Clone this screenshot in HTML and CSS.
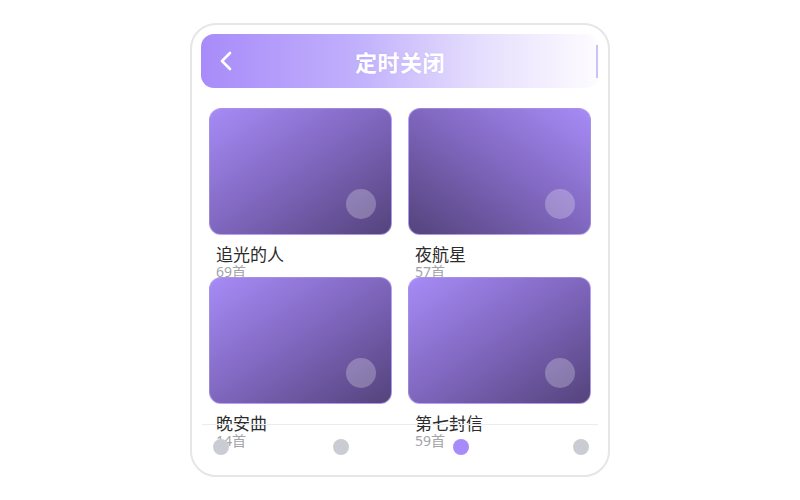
FILE: index.html
```html
<!DOCTYPE html>
<html lang="zh">
<head>
    <meta charset="UTF-8">
    <meta name="viewport" content="width=device-width, initial-scale=1.0">
    <title>定时关闭</title>
    <link rel="stylesheet" href="styles.css">
</head>
<body>
    <div class="phone">
        <header class="topbar">
            <a href="#" class="back">
                <svg width="20" height="22" viewBox="0 0 20 22"><path d="M11 3 L3 11 L11 19" fill="none" stroke="#fff" stroke-width="2.6" stroke-linecap="round" stroke-linejoin="round"/></svg>
            </a>
            <h1>定时关闭</h1>
            <span class="edge"></span>
        </header>

        <!-- 歌单列表 -->
        <main class="grid">
            <div class="item">
                <div class="cover"><span class="dot"></span></div>
                <div class="info">
                    <div class="name">追光的人</div>
                    <div class="count">69首</div>
                </div>
            </div>
            <div class="item">
                <div class="cover flip"><span class="dot"></span></div>
                <div class="info">
                    <div class="name">夜航星</div>
                    <div class="count">57首</div>
                </div>
            </div>
            <div class="item">
                <div class="cover"><span class="dot"></span></div>
                <div class="info">
                    <div class="name">晚安曲</div>
                    <div class="count">14首</div>
                </div>
            </div>
            <div class="item">
                <div class="cover"><span class="dot"></span></div>
                <div class="info">
                    <div class="name">第七封信</div>
                    <div class="count">59首</div>
                </div>
            </div>
        </main>

        <nav class="tabs">
            <span class="tab"></span>
            <span class="tab"></span>
            <span class="tab active"></span>
            <span class="tab"></span>
        </nav>
    </div>
</body>
</html>
```

FILE: styles.css
```css
body {
    margin: 0;
    padding: 23px 0 0;
    background-color: #fff;
    font-family: "Noto Sans", "Noto Sans CJK SC", sans-serif;
}
.phone {
    position: relative;
    box-sizing: border-box;
    width: 420px;
    height: 454px;
    margin: 0 auto;
    padding: 9px 9px 0;
    border: 2px solid #e6e6ea;
    border-radius: 26px;
    background-color: #fff;
    overflow: hidden;
}
.topbar {
    display: flex;
    align-items: center;
    height: 54px;
    padding: 0 0 0 18px;
    border-radius: 13px;
    background: linear-gradient(to right, #a88bf9 0%, #c2b1fc 40%, #e6defd 70%, #fdfcff 100%);
}
.back {
    display: flex;
    width: 30px;
    height: 22px;
}
.topbar h1 {
    flex: 1;
    margin: 0;
    text-align: center;
    color: #fff;
    font-size: 22px;
    font-weight: 700;
    letter-spacing: 0.5px;
    text-shadow: 0 0 2px rgba(120, 90, 220, 0.15);
}
.edge {
    width: 45px;
    height: 33px;
    border-right: 2px solid #cdc2f8;
    margin-right: 1px;
}
.grid {
    display: grid;
    grid-template-columns: 183px 183px;
    grid-auto-rows: 153px;
    column-gap: 16px;
    row-gap: 16px;
    padding: 20px 8px 0;
}
.cover {
    position: relative;
    box-sizing: border-box;
    height: 127px;
    border-radius: 12px;
    border: 1px solid rgba(196, 181, 253, 0.6);
    background: linear-gradient(to bottom right, #a78bf7 0%, #7f66bd 50%, #54437c 100%);
}
.cover.flip {
    background: linear-gradient(to bottom left, #a78bf7 0%, #7f66bd 50%, #54437c 100%);
}
.dot {
    position: absolute;
    right: 15px;
    bottom: 15px;
    width: 30px;
    height: 30px;
    border-radius: 50%;
    background-color: rgba(255, 255, 255, 0.25);
}
.info {
    height: 16px;
    margin-top: 10px;
    padding-left: 7px;
}
.name {
    font-size: 17px;
    line-height: 20px;
    color: #2b2b2b;
}
.count {
    font-size: 14px;
    line-height: 13px;
    color: #a3a3a8;
}
.tabs {
    position: absolute;
    left: 10px;
    right: 10px;
    top: 399px;
    display: flex;
    justify-content: space-between;
    padding: 14px 9px 0 11px;
    border-top: 1px solid #ececf0;
}
.tab {
    width: 16px;
    height: 16px;
    border-radius: 50%;
    background-color: #c9cdd3;
}
.tab.active {
    background-color: #a78bfa;
}
```
